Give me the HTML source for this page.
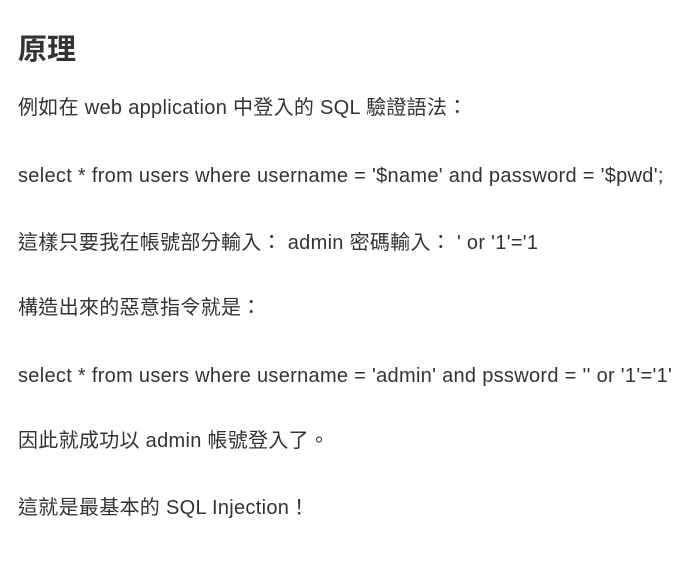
<!DOCTYPE html>
<html><head><meta charset="utf-8"><style>
body{margin:0;width:698px;height:564px;background:#fff;color:#333;font-family:"Liberation Sans","Noto Sans CJK TC",sans-serif;position:relative;overflow:hidden}
.l{position:absolute;left:18px;font-size:20px;line-height:24px;white-space:nowrap;letter-spacing:0.3px}
h1{position:absolute;left:18px;top:32px;margin:0;font-size:29px;line-height:36px;font-weight:bold}
</style></head><body>
<h1>原理</h1>
<div class="l" style="top:96px">例如在 web application 中登入的 SQL 驗證語法：</div>
<div class="l" style="top:164px">select * from users where username = '$name' and password = '$pwd';</div>
<div class="l" style="top:231px">這樣只要我在帳號部分輸入： admin 密碼輸入： ' or '1'='1</div>
<div class="l" style="top:296px">構造出來的惡意指令就是：</div>
<div class="l" style="top:364px">select * from users where username = 'admin' and pssword = '' or '1'='1'</div>
<div class="l" style="top:429px">因此就成功以 admin 帳號登入了。</div>
<div class="l" style="top:496px">這就是最基本的 SQL Injection！</div>
</body></html>
